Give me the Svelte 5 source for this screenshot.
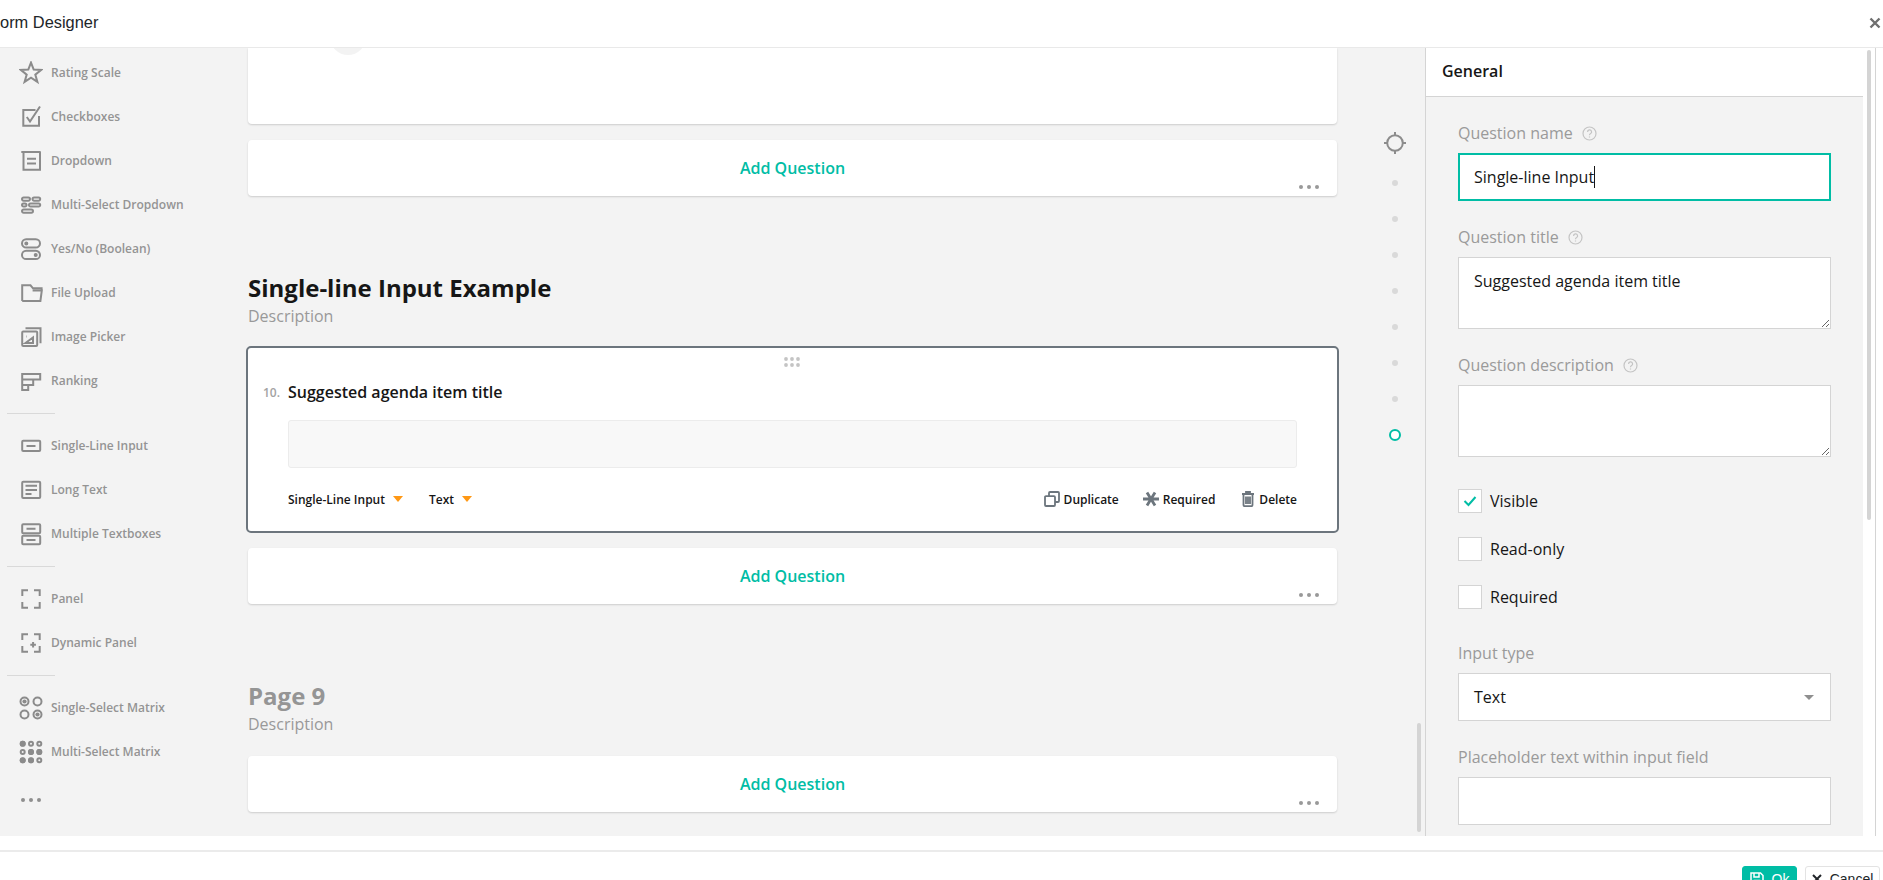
<script lang="ts">
  // small path helpers so the icon table stays readable
  function circ(cx: number, cy: number, r: number): string {
    return `M${cx - r} ${cy}a${r} ${r} 0 1 0 ${r * 2} 0a${r} ${r} 0 1 0 ${-r * 2} 0Z`;
  }
  function box(x: number, y: number, w: number, h: number, r = 1): string {
    return `M${x + r} ${y}h${w - 2 * r}a${r} ${r} 0 0 1 ${r} ${r}v${h - 2 * r}a${r} ${r} 0 0 1 ${-r} ${r}h${-w + 2 * r}a${r} ${r} 0 0 1 ${-r} ${-r}v${-h + 2 * r}a${r} ${r} 0 0 1 ${r} ${-r}Z`;
  }
  const corners = "M9 3.3H3.3V9M15 3.3h5.7V9M9 20.7H3.3V15M15 20.7h5.7V15";

  const groups = [
    [
      { label: "Rating Scale", d: "M12 1.6l2.7 7 7.6.3-6 4.7 2.1 7.3-6.4-4.2-6.4 4.2 2.1-7.3-6-4.7 7.6-.3Z" },
      { label: "Checkboxes", d: "M16.5 5H4.3v15.7H20V11M7.8 12l3.2 4.5 10-15" },
      { label: "Dropdown", d: "M2.3 3h19.4M4.5 3v17.7H21V3M8 9.7h9M8 14.5h9" },
      { label: "Multi-Select Dropdown", d: box(3, 4.5, 8, 3.2, 1.6) + box(13.5, 4.5, 7.7, 3.2, 1.6) + box(3, 10.6, 4.5, 3, 1.5) + box(10, 10.6, 11.2, 3, 1.5) + box(3, 16.5, 11, 3.2, 1.6) },
      { label: "Yes/No (Boolean)", d: box(3, 2.2, 18, 8.4, 4.2) + circ(7.3, 6.4, 1) + box(3, 13.7, 18, 8.4, 4.2) + circ(16.7, 17.9, 1) },
      { label: "File Upload", d: "M3.2 20V4.3h8.3l2.5 3h8.6v3M3.2 20h18.2l1.4-10.5H13.6" },
      { label: "Image Picker", d: box(3.2, 6.5, 15, 14.5) + "M6.5 3.2h15v15M6.5 18l7.5-5.5V18ZM7.5 11.5h.5" },
      { label: "Ranking", d: "M3.2 5h18v5.5h-7V16h-5v5H3.2ZM3.2 10.5h11M3.2 16h6" },
    ],
    [
      { label: "Single-Line Input", d: box(3.2, 6.7, 18, 10.3) + "M7.5 12h9" },
      { label: "Long Text", d: box(3.2, 3.8, 18, 16.3) + "M6.5 7.8h11.5M6.5 12h11.5M6.5 16h6" },
      { label: "Multiple Textboxes", d: box(3.2, 2.2, 18, 9) + box(3.2, 13.7, 18, 8.6) + "M7.5 6.7h9M7.5 18h9" },
    ],
    [
      { label: "Panel", d: corners },
      { label: "Dynamic Panel", d: corners + "M11.3 13.8h5.6M14.1 11v5.6" },
    ],
  ];
  const matrices = [
    { label: "Single-Select Matrix", rings: [[5.5, 5.5], [18.5, 5.5], [5.5, 18.5], [18.5, 18.5]], full: [[5.5, 5.5], [18.5, 18.5]], r: 4, dot: 2.1 },
    {
      label: "Multi-Select Matrix",
      rings: [[3.7, 3.7], [12, 3.7], [20.3, 3.7], [3.7, 12], [12, 12], [20.3, 12], [3.7, 20.3], [12, 20.3], [20.3, 20.3]],
      full: [[3.7, 3.7], [12, 12], [20.3, 12], [3.7, 20.3], [12, 20.3]],
      r: 2,
      dot: 2.9,
    },
  ];
  const navDots = [0, 1, 2, 3, 4, 5, 6];
</script>

{#snippet more()}
  <svg class="more" width="22" height="6" viewBox="0 0 22 6"><circle cx="3" cy="3" r="2" /><circle cx="11" cy="3" r="2" /><circle cx="19" cy="3" r="2" /></svg>
{/snippet}

{#snippet addQuestion()}
  <div class="card add">
    <span>Add Question</span>
    {@render more()}
  </div>
{/snippet}

{#snippet help()}
  <svg class="help" width="15" height="15" viewBox="0 0 15 15"><circle cx="7.5" cy="7.5" r="6.5" /><path d="M5.6 5.9a2 2 0 1 1 3 1.7c-.7.4-1.1.8-1.1 1.6M7.5 10.5v1.1" /></svg>
{/snippet}

<div class="dialog">
  <header>
    <h1>Form Designer</h1>
    <svg width="12" height="12" viewBox="0 0 12 12"><path d="M1.5 1.5l9 9M10.5 1.5l-9 9" /></svg>
  </header>

  <div class="main">
    <aside class="toolbox">
      {#each groups as group, i}
        {#if i > 0}<div class="sep"></div>{/if}
        {#each group as item}
          <div class="tool">
            <svg class="ico" width="24" height="24" viewBox="0 0 24 24"><path d={item.d} /></svg>
            <span>{item.label}</span>
          </div>
        {/each}
      {/each}
      <div class="sep"></div>
      {#each matrices as item}
        <div class="tool">
          <svg class="ico" width="24" height="24" viewBox="0 0 24 24">
            {#each item.rings as [cx, cy]}<circle {cx} {cy} r={item.r} />{/each}
            {#each item.full as [cx, cy]}<circle class="full" {cx} {cy} r={item.dot} />{/each}
          </svg>
          <span>{item.label}</span>
        </div>
      {/each}
      <svg class="tool-more" width="24" height="6" viewBox="0 0 24 6"><circle cx="4" cy="3" r="2" /><circle cx="12" cy="3" r="2" /><circle cx="20" cy="3" r="2" /></svg>
    </aside>

    <section class="canvas">
      <div class="card top"><div class="blob"></div></div>
      {@render addQuestion()}

      <div class="page-head">
        <h2>Single-line Input Example</h2>
        <p>Description</p>
      </div>

      <div class="card selected">
        <svg class="grip" width="16" height="11" viewBox="0 0 16 11">
          {#each [2, 8, 14] as cx}{#each [2, 8] as cy}<circle {cx} {cy} r="1.9" />{/each}{/each}
        </svg>
        <div class="q-title"><span class="num">10.</span><span>Suggested agenda item title</span></div>
        <div class="q-input"></div>
        <div class="q-tools">
          <span class="pick">Single-Line Input<i class="caret"></i></span>
          <span class="pick">Text<i class="caret"></i></span>
          <span class="grow"></span>
          <span class="act">
            <svg width="16" height="16" viewBox="0 0 16 16"><path d="M1 6.2a1 1 0 0 1 1-1h8a1 1 0 0 1 1 1V14a1 1 0 0 1-1 1H2a1 1 0 0 1-1-1ZM5 5V2a1 1 0 0 1 1-1h8a1 1 0 0 1 1 1v8a1 1 0 0 1-1 1h-3" /></svg>
            Duplicate
          </span>
          <span class="act">
            <svg width="16" height="16" viewBox="0 0 16 16"><path class="thick" d="M0 8h16M4 1.5l8 13M12 1.5l-8 13" /></svg>
            Required
          </span>
          <span class="act last">
            <svg width="14" height="16" viewBox="0 0 14 16"><path d="M1 3h12M5 3V1h4v2M2.5 3v11a1.2 1.2 0 0 0 1.2 1.2h6.6a1.2 1.2 0 0 0 1.2-1.2V3M5 5.5v7.5M7 5.5v7.5M9 5.5v7.5" /></svg>
            Delete
          </span>
        </div>
      </div>
      {@render addQuestion()}

      <div class="page-head muted">
        <h2>Page 9</h2>
        <p>Description</p>
      </div>
      {@render addQuestion()}
    </section>

    <nav class="pages">
      <svg class="target" width="24" height="24" viewBox="0 0 24 24"><circle cx="12" cy="12" r="7.8" /><path d="M12 1v3.5M12 19.5V23M1 12h3.5M19.5 12H23" /></svg>
      {#each navDots as d (d)}<span class="dot"></span>{/each}
      <span class="ring"></span>
      <div class="thumb"></div>
    </nav>

    <aside class="props">
      <div class="tab">General</div>
      <div class="fields">
        <div class="label">Question name {@render help()}</div>
        <div class="input focus">Single-line Input<i class="text-caret"></i></div>

        <div class="label">Question title {@render help()}</div>
        <textarea class="area" readonly value="Suggested agenda item title"></textarea>

        <div class="label">Question description {@render help()}</div>
        <textarea class="area" readonly></textarea>

        <div class="checks">
          <div class="check">
            <span class="tick"><svg width="14" height="12" viewBox="0 0 14 12"><path d="M1.5 6l4 4 7-8" /></svg></span>Visible
          </div>
          <div class="check"><span class="tick"></span>Read-only</div>
          <div class="check"><span class="tick"></span>Required</div>
        </div>

        <div class="label">Input type</div>
        <div class="input select">Text<i class="arrow"></i></div>

        <div class="label">Placeholder text within input field</div>
        <div class="input"></div>
      </div>
    </aside>

    <div class="rail"><div class="rail-thumb"></div></div>
  </div>

  <footer>
    <button class="ok">
      <svg width="14" height="14" viewBox="0 0 14 14"><path d="M1 1h9.5L13 3.5V13H1ZM4 1v4h5V1M4.5 13V8.5h5V13" /></svg>
      Ok
    </button>
    <button class="cancel">
      <svg width="10" height="10" viewBox="0 0 10 10"><path d="M1 1l8 8M9 1L1 9" /></svg>
      Cancel
    </button>
  </footer>
</div>

<style>
  :global(body) {
    margin: 0;
    background: #fff;
  }
  .dialog {
    display: flex;
    flex-direction: column;
    width: 1883px;
    height: 880px;
    overflow: hidden;
    font-family: "Open Sans", sans-serif;
    color: #161616;
  }

  /* header */
  header {
    display: flex;
    align-items: center;
    justify-content: space-between;
    flex: none;
    box-sizing: content-box;
    height: 45px;
    padding: 0 2px 2px 0;
    border-bottom: 1px solid #e9e9e9;
  }
  header h1 {
    margin: 0 0 0 -10px;
    font: 400 16.4px "Liberation Sans", Arial, sans-serif;
    color: #212529;
  }
  header svg {
    fill: none;
    stroke: #6f6f6f;
    stroke-width: 2.4;
  }

  .main {
    display: flex;
    flex: none;
    height: 788px;
    overflow: hidden;
  }

  /* left tool list */
  .toolbox {
    flex: none;
    display: flex;
    flex-direction: column;
    width: 230px;
    background: #f3f3f3;
    padding-top: 3px;
    box-sizing: border-box;
  }
  .tool {
    display: flex;
    align-items: center;
    flex: none;
    height: 44px;
    padding-left: 19px;
    font-size: 12px;
    font-weight: 600;
    color: #949494;
  }
  .tool span {
    margin-left: 8px;
    padding-bottom: 2px;
  }
  .ico {
    flex: none;
    fill: none;
    stroke: #8b8b8b;
    stroke-width: 2;
  }
  .ico .full {
    fill: #8b8b8b;
    stroke: none;
  }
  .sep {
    flex: none;
    width: 48px;
    height: 1px;
    margin: 10px 0 10px 7px;
    background: #d9d9d9;
  }
  .tool-more {
    flex: none;
    margin: 23px 0 0 19px;
    fill: #8f8f8f;
  }

  /* canvas */
  .canvas {
    flex: none;
    width: 1130px;
    box-sizing: border-box;
    padding: 0 23px 0 18px;
    background: #f3f3f3;
  }
  .card {
    position: relative;
    background: #fff;
    border-radius: 4px;
    box-shadow: 0 1px 2px rgba(0, 0, 0, 0.16);
  }
  .top {
    height: 76px;
    margin-bottom: 16px;
    border-radius: 0 0 4px 4px;
    overflow: hidden;
  }
  .blob {
    position: absolute;
    left: 82px;
    top: -29px;
    width: 36px;
    height: 36px;
    border-radius: 50%;
    background: #f3f3f3;
  }
  .add {
    display: flex;
    align-items: center;
    justify-content: center;
    height: 56px;
    font-size: 16px;
    font-weight: 600;
    color: #00bda5;
  }
  .add span {
    padding-bottom: 1px;
  }
  .more {
    position: absolute;
    right: 17px;
    bottom: 6px;
    fill: #999;
  }
  .page-head {
    margin-top: 76px;
    margin-bottom: 18px;
  }
  .page-head.muted {
    margin-bottom: 20px;
  }
  .page-head h2 {
    margin: 0;
    font-size: 24px;
    line-height: 32px;
    font-weight: 700;
  }
  .page-head p {
    margin: 0;
    font-size: 16px;
    line-height: 24px;
    color: #999;
  }
  .muted h2 {
    color: #959595;
  }

  /* selected question */
  .selected {
    display: flex;
    flex-direction: column;
    box-sizing: border-box;
    height: 187px;
    margin: 0 -2px 15px;
    padding: 0 40px 0 15px;
    border: 2px solid #6c757d;
    border-radius: 5px;
    box-shadow: none;
  }
  .grip {
    flex: none;
    align-self: center;
    margin: 9px 0 6px 24px;
    fill: #c4c4c4;
  }
  .q-title {
    display: flex;
    align-items: center;
    height: 36px;
    font-size: 16px;
    font-weight: 600;
  }
  .num {
    width: 25px;
    flex: none;
    font-size: 12px;
    color: #a3a3a3;
  }
  .q-input {
    flex: none;
    box-sizing: border-box;
    height: 48px;
    margin: 10px 0 0 25px;
    background: #f8f8f8;
    border: 1px solid #ececec;
    border-radius: 3px;
  }
  .q-tools {
    display: flex;
    align-items: center;
    height: 32px;
    margin: 15px 0 0 25px;
    font-size: 12px;
    font-weight: 600;
  }
  .pick {
    display: flex;
    align-items: center;
    margin-right: 26px;
  }
  .caret {
    width: 0;
    height: 0;
    margin-left: 8px;
    border: 5px solid transparent;
    border-top: 6px solid #ff9814;
    border-bottom: 0;
  }
  .grow {
    flex: 1;
  }
  .act {
    display: flex;
    align-items: center;
    gap: 4px;
    margin-left: 24px;
  }
  .act.last {
    margin-left: 26px;
  }
  .act svg {
    fill: none;
    stroke: #6c757d;
    stroke-width: 1.8;
  }
  .act svg .thick {
    stroke-width: 2.8;
  }

  /* page navigator */
  .pages {
    position: relative;
    flex: none;
    display: flex;
    flex-direction: column;
    align-items: center;
    gap: 30px;
    box-sizing: border-box;
    width: 66px;
    padding: 83px 0 0 5px;
    background: #f3f3f3;
    border-right: 1px solid #d4d4d4;
  }
  .target {
    flex: none;
    margin-bottom: -5px;
    fill: none;
    stroke: #8c8c8c;
    stroke-width: 2;
  }
  .dot {
    flex: none;
    width: 6px;
    height: 6px;
    border-radius: 50%;
    background: #d9d9d9;
  }
  .ring {
    flex: none;
    box-sizing: border-box;
    width: 12px;
    height: 12px;
    margin-top: -3px;
    border: 2.5px solid #00bda5;
    border-radius: 50%;
    background: #fff;
  }
  .thumb {
    position: absolute;
    right: 4px;
    top: 675px;
    width: 4px;
    height: 109px;
    border-radius: 2px;
    background: #d4d4d4;
  }

  /* property grid */
  .props {
    flex: none;
    width: 437px;
    background: #f3f3f3;
  }
  .tab {
    box-sizing: border-box;
    height: 49px;
    padding-left: 16px;
    background: #fff;
    border-bottom: 1px solid #d4d4d4;
    font-size: 16px;
    line-height: 46px;
    font-weight: 600;
  }
  .fields {
    padding: 0 32px;
  }
  .label {
    display: flex;
    align-items: center;
    gap: 9px;
    height: 24px;
    margin-top: 24px;
    margin-bottom: 8px;
    font-size: 16px;
    color: #9a9a9a;
  }
  .help {
    flex: none;
    fill: none;
    stroke: #c4c4c4;
    stroke-width: 1.2;
  }
  .input {
    display: flex;
    align-items: center;
    box-sizing: border-box;
    height: 48px;
    padding: 0 15px;
    background: #fff;
    border: 1px solid #d4d4d4;
    font-size: 16px;
    color: #161616;
  }
  .focus {
    border: 2px solid #00bda5;
    padding: 0 14px;
  }
  .text-caret {
    width: 1px;
    height: 22px;
    background: #161616;
  }
  .select {
    justify-content: space-between;
  }
  .arrow {
    width: 0;
    height: 0;
    margin-right: 1px;
    border: 5px solid transparent;
    border-top: 5px solid #8f8f8f;
    border-bottom: 0;
  }
  .area {
    display: block;
    box-sizing: border-box;
    width: 100%;
    height: 72px;
    margin: 0;
    padding: 11px 15px;
    background: #fff;
    border: 1px solid #d4d4d4;
    border-radius: 0;
    outline: none;
    font: 400 16px/24px "Open Sans", sans-serif;
    color: #161616;
  }
  .checks {
    display: flex;
    flex-direction: column;
    gap: 24px;
    margin-top: 32px;
    margin-bottom: 32px;
  }
  .check {
    display: flex;
    align-items: center;
    gap: 8px;
    height: 24px;
    font-size: 16px;
  }
  .tick {
    display: flex;
    align-items: center;
    justify-content: center;
    flex: none;
    box-sizing: border-box;
    width: 24px;
    height: 24px;
    background: #fff;
    border: 1px solid #d4d4d4;
  }
  .tick svg {
    fill: none;
    stroke: #00bda5;
    stroke-width: 2;
  }

  /* outer scrollbar */
  .rail {
    flex: 1;
    position: relative;
  }
  .rail-thumb {
    position: absolute;
    left: 4px;
    top: 2px;
    width: 4px;
    height: 470px;
    border-radius: 2px;
    background: #d4d4d4;
  }
  .rail::after {
    content: "";
    position: absolute;
    left: 12px;
    top: 0;
    bottom: 0;
    width: 1px;
    background: #d4d4d4;
  }

  /* footer */
  footer {
    display: flex;
    justify-content: flex-end;
    gap: 8px;
    flex: none;
    box-sizing: border-box;
    height: 45px;
    margin-top: 14px;
    padding: 14px 3px 0 0;
    border-top: 2px solid #ebebeb;
  }
  footer button {
    display: flex;
    align-items: center;
    justify-content: center;
    gap: 8px;
    flex: none;
    box-sizing: border-box;
    height: 26px;
    padding: 0;
    border-radius: 3px;
    font: 400 14px "Liberation Sans", Arial, sans-serif;
  }
  .ok {
    width: 55px;
    background: #00bda5;
    border: 1px solid #00bda5;
    color: #fff;
  }
  .ok svg {
    flex: none;
    fill: none;
    stroke: #fff;
    stroke-width: 1.5;
  }
  .cancel {
    width: 75px;
    background: #fff;
    border: 1px solid #e3e3e3;
    color: #212529;
  }
  .cancel svg {
    flex: none;
    fill: none;
    stroke: #212529;
    stroke-width: 2;
  }
</style>
